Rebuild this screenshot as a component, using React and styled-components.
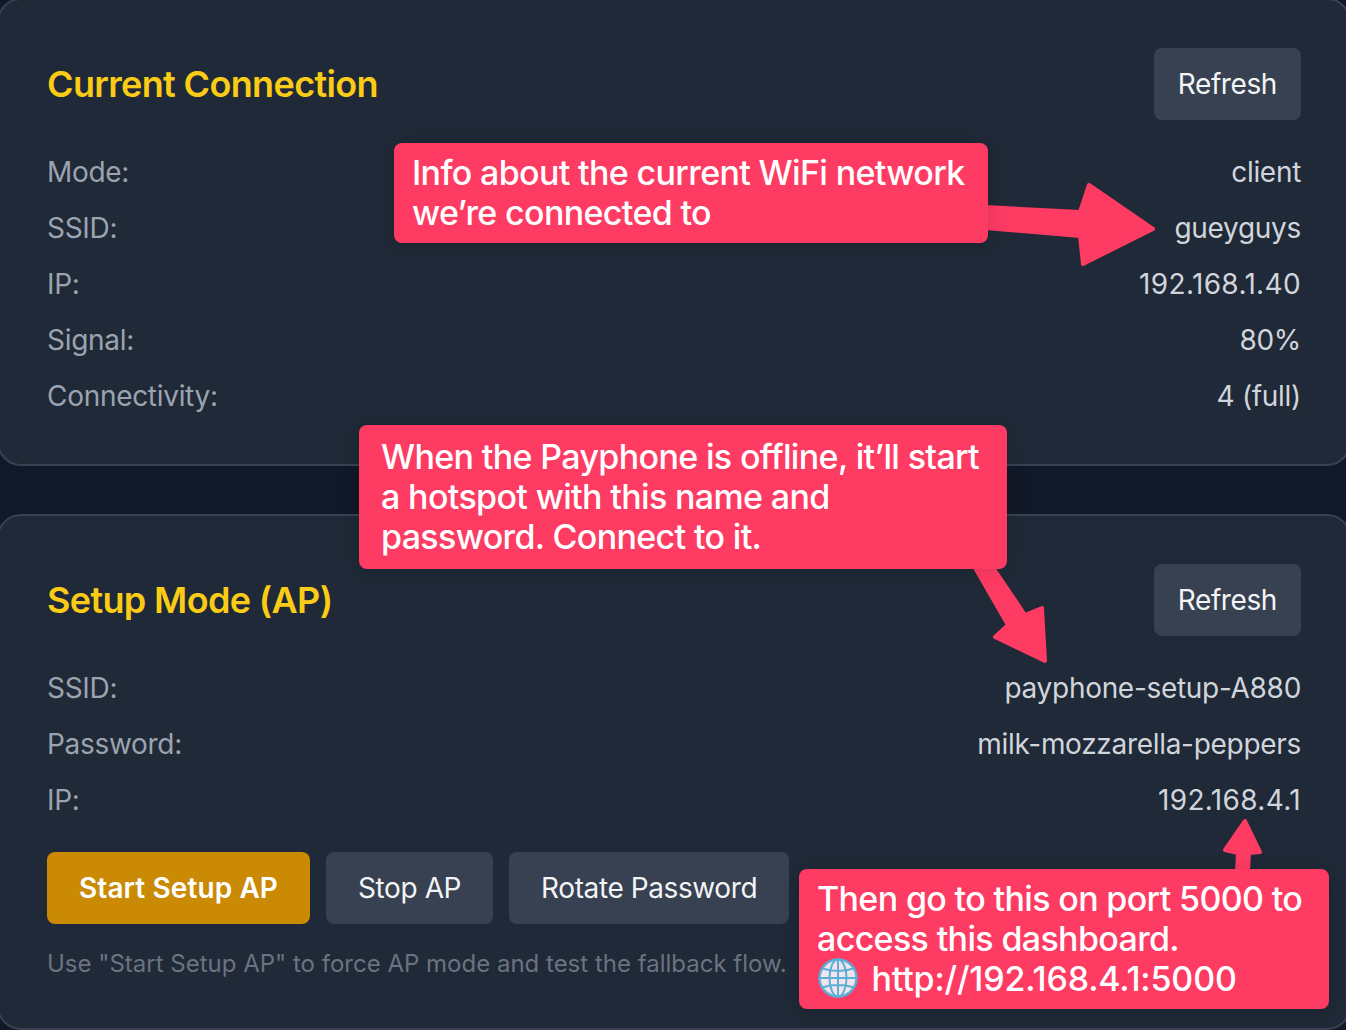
import styled, { createGlobalStyle } from 'styled-components';

const CURRENT_ROWS = [
    ['Mode:', 'client'],
    ['SSID:', 'gueyguys'],
    ['IP:', '192.168.1.40'],
    ['Signal:', '80%'],
    ['Connectivity:', '4 (full)'],
];

const SETUP_ROWS = [
    ['SSID:', 'payphone-setup-A880'],
    ['Password:', 'milk-mozzarella-peppers'],
    ['IP:', '192.168.4.1'],
];

const GlobeIcon = () => (
    <GlobeSvg viewBox="0 0 40 40" aria-hidden="true">
        <circle cx="20" cy="20" r="18.5" fill="#f3e3ec" stroke="#58b0d6" strokeWidth="2.4" />
        <g fill="none" stroke="#58b0d6" strokeWidth="2">
            <ellipse cx="20" cy="20" rx="8.5" ry="18.5" />
            <path d="M20 1.5v37M1.5 20h37M4.5 10.5c9 3.2 22 3.2 31 0M4.5 29.5c9-3.2 22-3.2 31 0" />
        </g>
    </GlobeSvg>
);

const InfoRows = ({ rows }) => (
    <Rows>
        {rows.map(([label, value]) => (
            <Row key={label}>
                <Label>{label}</Label>
                <Value $address={label === 'IP:'}>{value}</Value>
            </Row>
        ))}
    </Rows>
);

const App = () => {
    return (
        <Page>
            <GlobalStyle />
            <Card>
                <CardHeader>
                    <Title>Current Connection</Title>
                    <RefreshButton>Refresh</RefreshButton>
                </CardHeader>
                <InfoRows rows={CURRENT_ROWS} />
            </Card>

            <Card>
                <CardHeader>
                    <Title>Setup Mode (AP)</Title>
                    <RefreshButton>Refresh</RefreshButton>
                </CardHeader>
                <InfoRows rows={SETUP_ROWS} />
                <Actions>
                    <ActionButton $primary>Start Setup AP</ActionButton>
                    <ActionButton>Stop AP</ActionButton>
                    <ActionButton>Rotate Password</ActionButton>
                </Actions>
                <Note>Use "Start Setup AP" to force AP mode and test the fallback flow.</Note>
            </Card>

            {/* 화살표 + 설명 말풍선 */}
            <ArrowLayer viewBox="0 0 1346 1030">
                <path d="M985 207 L1080 212 L1089 185 L1153 229 L1083 264 L1080 236 L985 228 Z" />
                <path d="M974 566 L992 566 L1025 615 L1042 608 L1045 661 L995 637 L1008 625 Z" />
                <path d="M1237 872 L1238 853 L1225 850 L1245 821 L1260 852 L1249 853 L1248 872 Z" />
            </ArrowLayer>

            <Callout $left={394} $top={143} $width={594} $paddingY={10} $paddingX={18}>
                Info about the current WiFi network
                <br />
                we’re connected to
            </Callout>
            <Callout $left={359} $top={425} $width={648} $paddingY={12} $paddingX={22}>
                When the Payphone is offline, it’ll start
                <br />
                a hotspot with this name and
                <br />
                password. Connect to it.
            </Callout>
            <Callout $left={799} $top={869} $width={530} $paddingY={10} $paddingX={18}>
                Then go to this on port 5000 to
                <br />
                access this dashboard.
                <br />
                <GlobeIcon /> <Url>http://192.168.4.1:5000</Url>
            </Callout>
        </Page>
    );
};

export default App;

const GlobalStyle = createGlobalStyle`
    html, body {
        margin: 0;
        height: 100%;
        overflow: hidden;
        background-color: #111827;
    }

    * {
        box-sizing: border-box;
    }
`;

const Page = styled.div`
    position: relative;
    display: flex;
    flex-direction: column;
    gap: 48px;
    width: 1346px;
    height: 1030px;
    overflow: hidden;
    font-family: Inter, "Liberation Sans", sans-serif;
    font-size: 28px;
    line-height: 40px;

    & > section:first-of-type {
        margin-top: -2px;
    }
`;

const Card = styled.section`
    flex-shrink: 0;
    width: 1354px;
    margin-left: -3px;
    padding: 48px;
    background-color: #1f2937;
    border: 2px solid #374151;
    border-radius: 24px;
`;

const CardHeader = styled.div`
    display: flex;
    align-items: center;
    justify-content: space-between;
    margin-bottom: 32px;
`;

const Title = styled.h2`
    margin: 0;
    font-size: 36px;
    line-height: 40px;
    font-weight: 600;
    letter-spacing: -0.65px;
    color: #facc15;
`;

const Rows = styled.div`
    display: flex;
    flex-direction: column;
    gap: 16px;
`;

const Row = styled.div`
    display: flex;
    justify-content: space-between;
    letter-spacing: -0.3px;
`;

const Label = styled.span`
    color: #9ca3af;
`;

const Value = styled.span`
    color: #d1d5db;
    letter-spacing: ${(props) => (props.$address ? '0.35px' : '-0.3px')};
`;

const BaseButton = styled.button`
    border: 0;
    font-family: inherit;
    font-size: 28px;
    line-height: 40px;
    letter-spacing: -0.4px;
    padding: 16px 32px;
    border-radius: 8px;
    background-color: #374151;
    color: #f3f4f6;
`;

const RefreshButton = styled(BaseButton)`
    padding: 16px 24px;
`;

const ActionButton = styled(BaseButton)`
    background-color: ${(props) => (props.$primary ? '#ca8a04' : '#374151')};
    color: ${(props) => (props.$primary ? '#ffffff' : '#f3f4f6')};
    font-weight: ${(props) => (props.$primary ? 600 : 400)};
    letter-spacing: ${(props) => (props.$primary ? '0.1px' : '-0.4px')};
`;

const Actions = styled.div`
    display: flex;
    gap: 16px;
    margin-top: 32px;
`;

const Note = styled.p`
    margin: 24px 0 0;
    font-size: 24px;
    line-height: 32px;
    color: #6b7280;
`;

const ArrowLayer = styled.svg`
    position: absolute;
    left: 0;
    top: 0;
    width: 1346px;
    height: 1030px;
    fill: #fe3b63;
    stroke: #fe3b63;
    stroke-width: 4;
    stroke-linejoin: round;
`;

const Callout = styled.div`
    position: absolute;
    left: ${(props) => props.$left}px;
    top: ${(props) => props.$top}px;
    width: ${(props) => props.$width}px;
    padding: ${(props) => props.$paddingY}px ${(props) => props.$paddingX}px;
    background-color: #fe3b63;
    border-radius: 8px;
    box-shadow: 0 2px 20px rgba(0, 0, 0, 0.12);
    color: #ffffff;
    font-size: 34px;
    line-height: 40px;
    font-weight: 500;
    letter-spacing: -0.65px;
    white-space: nowrap;
`;

const Url = styled.span`
    margin-left: 5px;
    letter-spacing: -0.17px;
`;

const GlobeSvg = styled.svg`
    display: inline-block;
    vertical-align: -7px;
    width: 40px;
    height: 40px;
    margin: -4px 0 0 1px;
`;
